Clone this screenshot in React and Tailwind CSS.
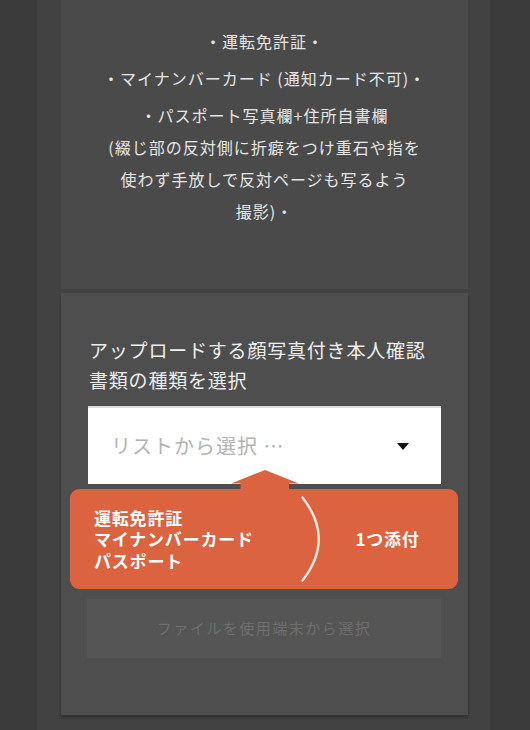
const JP = "font-['Noto_Sans_CJK_JP','Noto_Sans',sans-serif]"

const ITEMS = [
  ['・運転免許証・'],
  ['・マイナンバーカード (通知カード不可)・'],
  ['・パスポート写真欄+住所自書欄', '(綴じ部の反対側に折癖をつけ重石や指を', '使わず手放しで反対ページも写るよう', '撮影)・'],
]

function Callout() {
  return (
    <div className="absolute left-[9px] top-[196px] w-[388px] h-[100px] bg-[#db6340] rounded-[9px] flex items-center">
      {/* arrow pointing to the select */}
      <svg className="absolute left-[161px] top-[-19px]" width="68" height="20" viewBox="0 0 68 20">
        <path d="M0 13.5 L34 0 L68 13.5 L58 13.5 L58 20 L9.5 20 L9.5 13.5 Z" fill="#db6340" />
      </svg>
      <div className="w-[231px] pl-[24px] text-white font-bold text-[17px] leading-[21.5px] tracking-[0.8px]">
        <p>運転免許証</p>
        <p>マイナンバーカード</p>
        <p>パスポート</p>
      </div>
      <svg width="22" height="86" viewBox="0 0 22 86" className="shrink-0">
        <path d="M1.5 1.5 Q 34 43 1.5 84.5" fill="none" stroke="#ffffff" strokeOpacity="0.85" strokeWidth="2.4" strokeLinecap="round" />
      </svg>
      <div className="flex-1 text-center text-white font-bold text-[17px] tracking-[0.8px] pr-[6px]">1つ添付</div>
    </div>
  )
}

export default function App() {
  return (
    <div className={`w-[530px] h-[730px] overflow-hidden bg-[#3b3b3b] flex ${JP}`}>
      <div className="w-[37px] shrink-0" />
      <div className="w-[453px] shrink-0 bg-[#424242] pl-[24px] pr-[22px]">
        {/* top card: accepted documents */}
        <div className="h-[289px] bg-[#4a4a4a] pt-[25px] px-[20px] text-center text-[#e6e6e6] text-[16px] leading-[32px] tracking-[1px]">
          {ITEMS.map(lines => (
            <p key={lines[0]} className="mb-[5px]">
              {lines.map(l => (
                <span key={l} className="block">{l}</span>
              ))}
            </p>
          ))}
        </div>

        {/* upload card */}
        <div className="relative mt-[4px] h-[422px] bg-[#4e4e4e] shadow-[0_3px_3px_rgba(0,0,0,0.25)] px-[27px] pt-[42px]">
          <h2 className="text-[#eeeeee] text-[19px] leading-[30px] tracking-[0.8px] pl-[1px]">
            アップロードする顔写真付き本人確認書類の種類を選択
          </h2>
          <div className="mt-[11px] h-[78px] bg-white border-t-2 border-[#dcdcdc] flex items-center justify-between pl-[23px] pr-[32px]">
            <span className="text-[#b3b3b3] text-[20px] tracking-[1px]">リストから選択 …</span>
            <svg width="12" height="7" viewBox="0 0 12 7">
              <path d="M0 0 L12 0 L6 7 Z" fill="#111" />
            </svg>
          </div>
          <button className="mt-[115px] w-[354px] h-[59px] -ml-[1px] bg-[#555555] text-[#6e6e6e] text-[15px] tracking-[1.5px]">
            ファイルを使用端末から選択
          </button>
          <Callout />
        </div>
      </div>
      <div className="flex-1" />
    </div>
  )
}
